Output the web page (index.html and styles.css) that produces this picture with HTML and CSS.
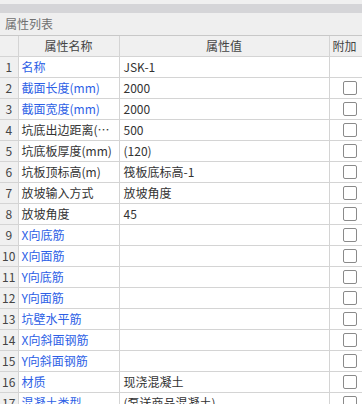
FILE: index.html
```html
<!DOCTYPE html>
<html lang="zh-CN">
<head>
  <meta charset="UTF-8">
  <title>属性列表</title>
  <link rel="stylesheet" href="styles.css">
</head>
<body>
  <div class="panel">
    <div class="topbar"></div>
    <div class="title">属性列表</div>
    <table class="props">
      <colgroup>
        <col class="c-num">
        <col class="c-name">
        <col class="c-val">
        <col class="c-add">
      </colgroup>
      <thead>
        <tr>
          <th></th>
          <th>属性名称</th>
          <th>属性值</th>
          <th class="add-head">附加</th>
        </tr>
      </thead>
      <tbody>
        <tr><td class="num">1</td><td class="name blue">名称</td><td>JSK-1</td><td class="chk"></td></tr>
        <tr><td class="num">2</td><td class="name blue">截面长度(mm)</td><td>2000</td><td class="chk"><span class="box"></span></td></tr>
        <tr><td class="num">3</td><td class="name blue">截面宽度(mm)</td><td>2000</td><td class="chk"><span class="box"></span></td></tr>
        <tr><td class="num">4</td><td class="name">坑底出边距离(…</td><td>500</td><td class="chk"><span class="box"></span></td></tr>
        <tr><td class="num">5</td><td class="name">坑底板厚度(mm)</td><td>(120)</td><td class="chk"><span class="box"></span></td></tr>
        <tr><td class="num">6</td><td class="name">坑板顶标高(m)</td><td>筏板底标高-1</td><td class="chk"><span class="box"></span></td></tr>
        <tr><td class="num">7</td><td class="name">放坡输入方式</td><td>放坡角度</td><td class="chk"><span class="box"></span></td></tr>
        <tr><td class="num">8</td><td class="name">放坡角度</td><td>45</td><td class="chk"><span class="box"></span></td></tr>
        <tr><td class="num">9</td><td class="name blue">X向底筋</td><td></td><td class="chk"><span class="box"></span></td></tr>
        <tr><td class="num">10</td><td class="name blue">X向面筋</td><td></td><td class="chk"><span class="box"></span></td></tr>
        <tr><td class="num">11</td><td class="name blue">Y向底筋</td><td></td><td class="chk"><span class="box"></span></td></tr>
        <tr><td class="num">12</td><td class="name blue">Y向面筋</td><td></td><td class="chk"><span class="box"></span></td></tr>
        <tr><td class="num">13</td><td class="name blue">坑壁水平筋</td><td></td><td class="chk"><span class="box"></span></td></tr>
        <tr><td class="num">14</td><td class="name blue">X向斜面钢筋</td><td></td><td class="chk"><span class="box"></span></td></tr>
        <tr><td class="num">15</td><td class="name blue">Y向斜面钢筋</td><td></td><td class="chk"><span class="box"></span></td></tr>
        <tr><td class="num">16</td><td class="name blue">材质</td><td>现浇混凝土</td><td class="chk"><span class="box"></span></td></tr>
        <tr><td class="num">17</td><td class="name blue">混凝土类型</td><td>(泵送商品混凝土)</td><td class="chk"><span class="box"></span></td></tr>
      </tbody>
    </table>
  </div>
</body>
</html>
```

FILE: styles.css
```css
body {
  margin: 0;
  background: #ffffff;
  font-family: "Noto Sans CJK SC", "Noto Sans", sans-serif;
  font-size: 12px;
  color: #333333;
  overflow: hidden;
}
.panel {
  width: 362px;
  height: 404px;
  overflow: hidden;
  background: #f0f0f0;
  padding-top: 4px;
}
.topbar {
  height: 9px;
  background: #d5d5d8;
}
.title {
  height: 22px;
  line-height: 22px;
  padding-left: 5px;
  font-size: 12px;
  color: #707070;
  background: #efefef;
  border-bottom: 1px solid #c8c8c8;
}
.props {
  border-collapse: collapse;
  table-layout: fixed;
  width: 372px;
  background: #ffffff;
}
.c-num { width: 18px; }
.c-name { width: 101px; }
.c-val { width: 210px; }
.c-add { width: 43px; }
.props th,
.props td {
  height: 20px;
  padding: 0 4px;
  border: 1px solid #d4d4d4;
  white-space: nowrap;
  overflow: hidden;
  line-height: 20px;
}
.props tr:first-child th { border-top: none; }
.props th:first-child,
.props td:first-child { border-left: none; }
.props th {
  background: #f0f0f0;
  font-weight: normal;
  color: #444444;
  text-align: center;
}
.props th.add-head {
  text-align: left;
  padding-left: 3px;
}
.props td.num {
  background: #f0f0f0;
  padding: 0;
  text-align: center;
  color: #444444;
}
.props td.name { padding-left: 3px; }
.blue { color: #2d5fe6; }
.props td.chk {
  padding: 0 0 0 13px;
}
.box {
  display: block;
  width: 12px;
  height: 12px;
  border: 1px solid #8a8a8a;
  border-radius: 2px;
  background: #ffffff;
}
```
